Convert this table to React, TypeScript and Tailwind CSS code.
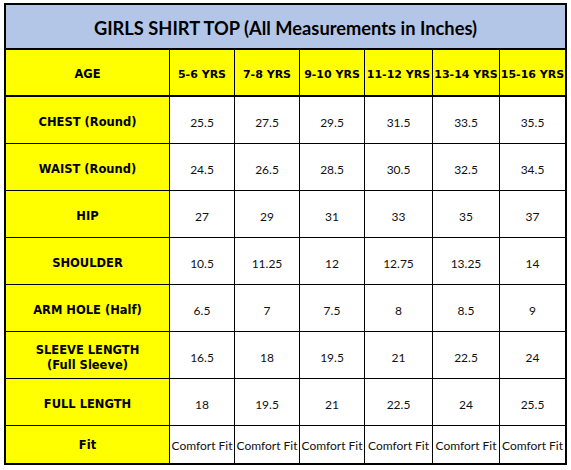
import React from "react";

const cols = ["5-6 YRS", "7-8 YRS", "9-10 YRS", "11-12 YRS", "13-14 YRS", "15-16 YRS"];
const widths = ["w-[65px]", "w-[65px]", "w-[65px]", "w-[68px]", "w-[67px]", "w-[65px]"];

const rows: { label: React.ReactNode; values: string[] }[] = [
  { label: "CHEST (Round)", values: ["25.5", "27.5", "29.5", "31.5", "33.5", "35.5"] },
  { label: "WAIST (Round)", values: ["24.5", "26.5", "28.5", "30.5", "32.5", "34.5"] },
  { label: "HIP", values: ["27", "29", "31", "33", "35", "37"] },
  { label: "SHOULDER", values: ["10.5", "11.25", "12", "12.75", "13.25", "14"] },
  { label: "ARM HOLE (Half)", values: ["6.5", "7", "7.5", "8", "8.5", "9"] },
  {
    label: (
      <span className="flex flex-col items-center leading-[15px]">
        <span>SLEEVE LENGTH</span>
        <span>(Full Sleeve)</span>
      </span>
    ),
    values: ["16.5", "18", "19.5", "21", "22.5", "24"],
  },
  { label: "FULL LENGTH", values: ["18", "19.5", "21", "22.5", "24", "25.5"] },
];

const headFont = "font-['DejaVu_Sans',sans-serif] font-bold text-[11px] text-black";
const labelFont = "font-['DejaVu_Sans',sans-serif] font-bold text-[11.5px] text-black";
const valueFont = "font-['Lato',sans-serif] text-[12px] text-[#111]";

export default function App() {
  return (
    <div className="w-[571px] h-[470px] bg-white pt-[3px] pl-[4px]">
      <div className="w-[563px] border-2 border-black flex flex-col">
        <div className="h-[45px] pt-[4px] bg-[#b4c6e7] border-b-2 border-black flex items-center justify-center font-['Lato',sans-serif] font-bold text-[18.3px] text-black">
          GIRLS SHIRT TOP (All Measurements in Inches)
        </div>
        <div className="flex h-[47px] border-b-2 border-black bg-[#ffff00]">
          <div className={`w-[164px] pt-[5px] border-r border-black flex items-center justify-center ${labelFont}`}>AGE</div>
          {cols.map((c, i) => (
            <div
              key={c}
              className={`${widths[i]} pt-[5px] ${i < 5 ? "border-r border-black" : ""} flex items-center justify-center whitespace-nowrap ${headFont}`}
            >
              {c}
            </div>
          ))}
        </div>
        {rows.map((r, ri) => (
          <div key={ri} className="flex h-[47px] border-b border-black">
            <div className={`w-[164px] pt-[5px] bg-[#ffff00] border-r border-black flex items-center justify-center ${labelFont}`}>
              {r.label}
            </div>
            {r.values.map((v, i) => (
              <div
                key={i}
                className={`${widths[i]} pt-[5px] ${i < 5 ? "border-r border-black" : ""} flex items-center justify-center ${valueFont}`}
              >
                {v}
              </div>
            ))}
          </div>
        ))}
        <div className="flex h-[37px]">
          <div className={`w-[164px] pt-[3px] bg-[#ffff00] border-r border-black flex items-center justify-center ${labelFont}`}>
            Fit
          </div>
          {cols.map((c, i) => (
            <div
              key={c}
              className={`${widths[i]} pt-[3px] ${i < 5 ? "border-r border-black" : ""} flex items-center justify-center whitespace-nowrap ${valueFont}`}
            >
              Comfort Fit
            </div>
          ))}
        </div>
      </div>
    </div>
  );
}
